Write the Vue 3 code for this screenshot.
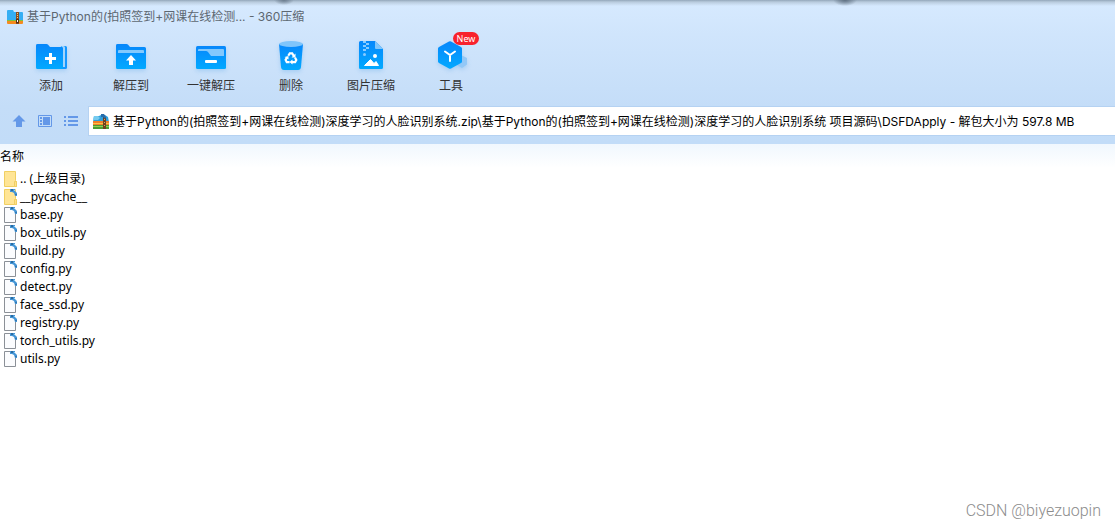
<script setup>
import { ref } from 'vue'

const tools = [
  { id: 'add', label: '添加' },
  { id: 'extract', label: '解压到' },
  { id: 'quick', label: '一键解压' },
  { id: 'trash', label: '删除' },
  { id: 'image', label: '图片压缩' },
  { id: 'tools', label: '工具', badge: 'New' },
]

const path = ref('基于Python的(拍照签到+网课在线检测)深度学习的人脸识别系统.zip\\基于Python的(拍照签到+网课在线检测)深度学习的人脸识别系统 项目源码\\DSFDApply - 解包大小为 597.8 MB')

const entries = [
  { name: '.. (上级目录)', folder: true, parent: true },
  { name: '__pycache__', folder: true },
  { name: 'base.py' },
  { name: 'box_utils.py' },
  { name: 'build.py' },
  { name: 'config.py' },
  { name: 'detect.py' },
  { name: 'face_ssd.py' },
  { name: 'registry.py' },
  { name: 'torch_utils.py' },
  { name: 'utils.py' },
]
</script>

<template>
  <div class="window">
    <header class="chrome">
      <div class="titlebar">
        <svg class="app-icon" viewBox="0 0 16 14" aria-hidden="true">
          <path d="M0 1q0-1 1-1h5l1 2h8q1 0 1 1v7H0z" fill="#35aef3" />
          <path d="M0 10h16v2H0z" fill="#7cc142" />
          <path d="M0 11h16v2q0 1-1 1H1q-1 0-1-1z" fill="#f58a1f" />
          <path d="M9 2h3v12H9z" fill="#8a4a22" />
          <path d="M10 3h1v1h-1zM10 5h1v1h-1zM10 7h1v1h-1z" fill="#f7cf72" />
          <path d="M9 9h3v4H9z" fill="#5a3013" />
          <path d="M10 10h1v2h-1z" fill="#fff" />
        </svg>
        <span>基于Python的(拍照签到+网课在线检测... - 360压缩</span>
      </div>

      <nav class="toolbar">
        <button v-for="tool in tools" :key="tool.id" class="tool" type="button">
          <span class="tool-picture">
            <svg viewBox="0 0 36 32" aria-hidden="true">
              <defs>
                <linearGradient :id="'fill-' + tool.id" x1="0" y1="0" x2="0" y2="1">
                  <stop offset="0" stop-color="#0787fb" />
                  <stop offset="1" stop-color="#02a9ff" />
                </linearGradient>
              </defs>
              <g v-if="tool.id === 'add'">
                <path d="M28 5h4.500a1.500 1.500 0 0 1 1.500 1.500v20a1.500 1.500 0 0 1-1.500 1.500H25z" fill="#1597ff" />
                <path d="M28 5h2.500a1.500 1.500 0 0 1 1.500 1.500V26h-2V7z" fill="#a3d4fb" />
                <path d="M4.500 3h9a2 2 0 0 1 1.600.8L17 6h11.500A1.500 1.500 0 0 1 30 7.500V28H4.500A1.500 1.500 0 0 1 3 26.500v-22A1.500 1.500 0 0 1 4.500 3z" :fill="`url(#fill-${tool.id})`" />
                <path d="M16 12h3v4h4v3h-4v4h-3v-4h-4v-3h4z" fill="#fff" />
              </g>
              <g v-else-if="tool.id === 'extract'">
                <path d="M4.500 3h9a2 2 0 0 1 1.600.8L17 6h14.500A1.500 1.500 0 0 1 33 7.500v19a1.500 1.500 0 0 1-1.500 1.500h-27A1.500 1.500 0 0 1 3 26.500v-22A1.500 1.500 0 0 1 4.500 3z" :fill="`url(#fill-${tool.id})`" />
                <path d="M6 9h24a1 1 0 0 1 1 1v2H5v-2a1 1 0 0 1 1-1z" fill="#83c9fd" />
                <path d="M18 14l5 5.500h-3V24h-4v-4.500h-3z" fill="#fff" />
              </g>
              <g v-else-if="tool.id === 'quick'">
                <rect x="3" y="5" width="30" height="23" rx="1.500" :fill="`url(#fill-${tool.id})`" />
                <path d="M6 8h24a1 1 0 0 1 1 1v6H18l-3-4q-1-1-2-1H5V9a1 1 0 0 1 1-1z" fill="#82c8fd" />
                <rect x="12" y="19" width="12" height="3" rx="1" fill="#fff" />
              </g>
              <g v-else-if="tool.id === 'trash'">
                <path d="M6 3h24l-2 23q-.3 3-3 3H11q-2.700 0-3-3z" :fill="`url(#fill-${tool.id})`" />
                <ellipse cx="18" cy="3" rx="12" ry="3" fill="#7fc5fb" />
                <g fill="none" stroke="#fff" stroke-width="2.200">
                  <path d="M15.300 14.800l1.500-2.500h2.400l1.700 2.800" />
                  <path d="M22 16.500l1.300 2.400-1.200 2.300h-3.300" />
                  <path d="M16.600 21.200h-2.800l-1.200-2.300 1.600-2.700" />
                </g>
                <path d="M22.500 12.500v4h-4zM19.500 18.500v5l-3-2.500zM11.500 16l4-1v3.500z" fill="#fff" />
              </g>
              <g v-else-if="tool.id === 'image'">
                <path d="M7.500 0H22l8 8v18.500a1.500 1.500 0 0 1-1.500 1.500h-21A1.500 1.500 0 0 1 6 26.500v-25A1.500 1.500 0 0 1 7.500 0z" :fill="`url(#fill-${tool.id})`" />
                <path d="M22 0l8 8h-7a1 1 0 0 1-1-1z" fill="#82c6fb" />
                <path d="M10 0h3v2h-3zM13 2h3v2h-3zM10 4h3v2h-3zM13 6h3v2h-3zM10 8h3v2h-3z" fill="#8acbff" />
                <circle cx="11.500" cy="13.500" r="1.500" fill="#8acbff" />
                <circle cx="22" cy="15" r="2" fill="#fff" />
                <path d="M11.500 24.500l6-6 3.500 4 2-2 2.500 4z" fill="#fff" stroke="#fff" stroke-linejoin="round" />
              </g>
              <g v-else>
                <path d="M28 14l6 3v6.500L29 27l-6-3.500z" fill="#92c8f7" />
                <path d="M16 .5q1-.6 2 0L28 6q1 .6 1 1.500v13q0 1-1 1.500l-10 5.500q-1 .6-2 0L6 22q-1-.6-1-1.500v-13Q5 6.600 6 6z" :fill="`url(#fill-${tool.id})`" />
                <path d="M12 10.500l5 3.500 5-3.500M17 14v6" fill="none" stroke="#fff" stroke-width="2" stroke-linecap="round" />
              </g>
            </svg>
            <span v-if="tool.badge" class="badge">{{ tool.badge }}</span>
          </span>
          <span>{{ tool.label }}</span>
        </button>
      </nav>

      <div class="location">
        <button class="nav-button" type="button" aria-label="向上">
          <svg viewBox="0 0 16 14" aria-hidden="true">
            <path d="M8 1l6.500 6.500H11V13H5V7.500H1.500z" fill="#6498e8" />
          </svg>
        </button>
        <button class="nav-button" type="button" aria-label="预览">
          <svg viewBox="0 0 16 14" aria-hidden="true">
            <path d="M1.500 1.500h13v11h-13z" fill="none" stroke="#6498e8" />
            <path d="M3 3h2v2H3zM3 6h2v2H3zM3 9h2v2H3zM6 3h7v8H6z" fill="#6498e8" />
          </svg>
        </button>
        <button class="nav-button" type="button" aria-label="列表">
          <svg viewBox="0 0 16 14" aria-hidden="true">
            <path d="M1 2h2v2H1zM5 2h10v2H5zM1 6h2v2H1zM5 6h10v2H5zM1 10h2v2H1zM5 10h10v2H5z" fill="#6498e8" />
          </svg>
        </button>
        <label class="address">
          <svg viewBox="0 0 16 15" aria-hidden="true">
            <path d="M1 2h5l2-1h4l3 2 1 5H0z" fill="#2f9fdc" />
            <path d="M1 2h4l2 2-2 2H0z" fill="#76cbef" />
            <path d="M0 7h16v4H0z" fill="#f0802a" />
            <path d="M0 9h16v1H0z" fill="#ffc045" />
            <path d="M0 11h16v4H0z" fill="#4a9d34" />
            <path d="M0 12h16v1H0z" fill="#93cd55" />
            <path d="M10 3h3v12h-3z" fill="#70401f" />
            <path d="M8 0h3l2 3-1 2-2-2H8z" fill="#286caa" />
            <path d="M11 5h1v1h-1zM11 8h1v1h-1zM11 11h1v1h-1z" fill="#d9a55f" />
          </svg>
          <input v-model="path" type="text" aria-label="路径" spellcheck="false" />
        </label>
      </div>
    </header>

    <main class="listing">
      <table>
        <thead>
          <tr><th scope="col">名称</th></tr>
        </thead>
        <tbody>
          <tr v-for="entry in entries" :key="entry.name">
            <td>
              <div class="entry">
                <svg viewBox="0 0 14 16" aria-hidden="true">
                  <g v-if="entry.folder">
                    <path d="M.5.5h11v9l1 1v5H.5z" fill="#ffe596" stroke="#f0cf62" />
                    <path d="M10.500 10.500h2v5h-2z" fill="#ffe08a" stroke="#f0cf62" />
                  </g>
                  <path v-else d="M.5.5h8l3 3v12H.5z" fill="#fbfcfe" stroke="#8b9097" />
                  <g v-if="!entry.parent">
                    <path d="M6 0h5v2l2 2v3h-2l-1-3-2-1H6z" fill="#4596d6" />
                    <path d="M7 0h2v2H7z" fill="#2b6a9f" />
                    <path d="M11 5h2v1h-2z" fill="#3478b4" />
                    <path d="M10 1h1v1h-1z" fill="#9bd0f2" />
                  </g>
                </svg>
                <span>{{ entry.name }}</span>
              </div>
            </td>
          </tr>
        </tbody>
      </table>
    </main>
    <footer class="credit">CSDN @biyezuopin</footer>
  </div>
</template>

<style>
body {
  margin: 0;
}
</style>

<style scoped>
.window {
  min-height: 100vh;
  display: flex;
  flex-direction: column;
  background: #fff;
  color: #000;
  font: 12px/18px "Noto Sans", "Noto Sans CJK SC", sans-serif;
}

button,
input {
  border: 0;
  padding: 0;
  background: none;
  font: inherit;
  color: inherit;
}

.chrome {
  background:
    radial-gradient(10px 5px at 284px 0, #6b7c8e, transparent),
    radial-gradient(12px 6px at 845px 0, #5f7082, transparent),
    linear-gradient(#93a6ba, #b9cbdd 2px, transparent 6px),
    linear-gradient(#d7eaff, #d0e5fc 34px, #c4ddf8 107px, #c2dcf8);
  padding-bottom: 9px;
}

.titlebar {
  display: flex;
  align-items: center;
  gap: 4px;
  height: 18px;
  padding: 8px 7px;
  color: #5d6771;
  font-family: Inter, "Noto Sans CJK SC", sans-serif;
}

.app-icon {
  width: 16px;
  height: 14px;
}

.toolbar {
  display: flex;
  padding: 7px 11px 0;
  height: 73px;
  box-sizing: border-box;
}

.tool {
  display: flex;
  flex-direction: column;
  align-items: center;
  width: 80px;
  height: 56px;
  color: #333;
}

.tool-picture {
  position: relative;
  height: 36px;
}

.tool-picture svg {
  display: block;
  width: 36px;
  height: 32px;
  overflow: visible;
  filter: drop-shadow(0 2px 2px #5fa8e855);
}

.badge {
  position: absolute;
  left: 20px;
  top: -9px;
  width: 26px;
  border-radius: 7px;
  background: #f8222d;
  color: #fff;
  font-size: 9px;
  line-height: 13px;
  text-align: center;
}

.location {
  display: flex;
  align-items: center;
  padding-left: 11px;
}

.nav-button {
  width: 16px;
  margin-right: 10px;
}

.nav-button svg {
  display: block;
}

.address {
  flex: 1;
  display: flex;
  align-items: center;
  gap: 4px;
  height: 28px;
  padding-left: 4px;
  background: #fff;
  box-shadow: 0 0 0 1px #b5d2f2;
}

.address svg {
  width: 16px;
  height: 15px;
}

.address input {
  flex: 1;
  min-width: 0;
  padding-top: 2px;
  outline: 0;
  font-family: Inter, "Noto Sans CJK SC", sans-serif;
}

.listing {
  flex: 1;
  background: linear-gradient(#f0f7fe, #fff 24px);
}

table {
  width: 100%;
  border-collapse: collapse;
}

th {
  height: 26px;
  padding: 0;
  font-weight: 400;
  text-align: left;
}

td {
  padding: 0;
}

.entry {
  display: flex;
  align-items: center;
  gap: 2px;
  height: 18px;
  padding-left: 4px;
}

.entry svg {
  width: 14px;
  height: 16px;
}

.credit {
  padding: 0 14px 6px;
  color: #8c8c8c;
  font: 300 16px/22px Roboto, "Liberation Sans", sans-serif;
  text-align: right;
}
</style>
